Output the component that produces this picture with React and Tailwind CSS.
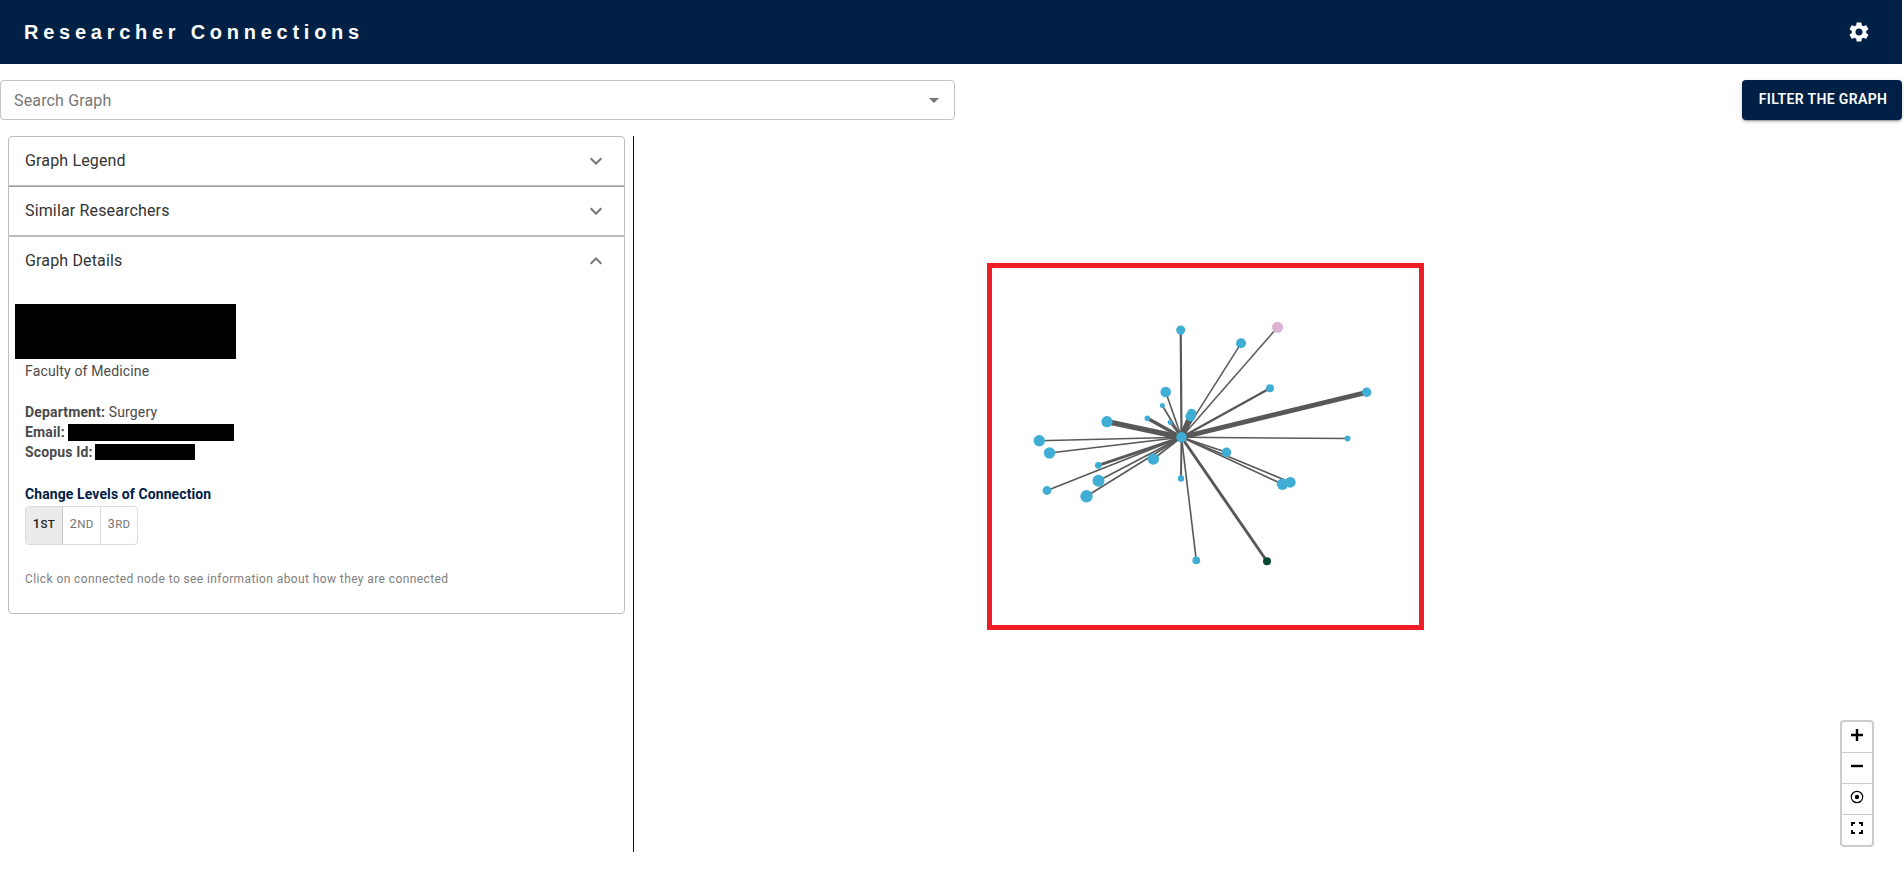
import { MdSettings, MdArrowDropDown, MdExpandMore } from "react-icons/md";

const BLUE = "#40aed4";
const CENTER = { x: 1181.5, y: 437.3 };

const nodes = [
  { x: 1180.7, y: 330, r: 4.5, w: 2.2 },
  { x: 1241, y: 343.3, r: 5, w: 1.5 },
  { x: 1277.5, y: 327.3, r: 5.5, w: 1.5, fill: "#ddb3d3" },
  { x: 1270, y: 388.3, r: 4, w: 2.4 },
  { x: 1366.7, y: 392.3, r: 4.7, w: 4.8 },
  { x: 1347.5, y: 438.5, r: 3, w: 1.4 },
  { x: 1165.7, y: 392, r: 5.3, w: 1.6 },
  { x: 1162.3, y: 405.5, r: 2.5, w: 1.7 },
  { x: 1147.3, y: 418.3, r: 2.8, w: 3.5 },
  { x: 1170, y: 422.5, r: 2.4, w: 1.7 },
  { x: 1191.7, y: 413.5, r: 4.7, w: 5.5 },
  { x: 1190.5, y: 416.5, r: 5, w: 5.5 },
  { x: 1107, y: 421.7, r: 5.6, w: 5.4 },
  { x: 1039.3, y: 440.7, r: 5.7, w: 1.6 },
  { x: 1049.5, y: 453, r: 5.7, w: 1.6 },
  { x: 1098.3, y: 465.3, r: 3.4, w: 3 },
  { x: 1047, y: 490.5, r: 4.4, w: 1.5 },
  { x: 1098.5, y: 480.7, r: 6, w: 1.6 },
  { x: 1086.5, y: 496.3, r: 6.2, w: 1.6 },
  { x: 1153.3, y: 459, r: 5.8, w: 1.8 },
  { x: 1181, y: 478.5, r: 3.2, w: 2 },
  { x: 1196.3, y: 560.3, r: 3.9, w: 1.6 },
  { x: 1267, y: 561.3, r: 4, w: 2.9, fill: "#04492f" },
  { x: 1226.5, y: 452.3, r: 4.8, w: 1.7 },
  { x: 1282.5, y: 484.3, r: 5.7, w: 1.6 },
  { x: 1290.3, y: 482.3, r: 5.4, w: 1.6 },
];

function Graph() {
  return (
    <svg viewBox="634 136 1268 716" width="1268" height="716" className="block">
      {nodes.map((n, i) => (
        <line key={i} x1={CENTER.x} y1={CENTER.y} x2={n.x} y2={n.y} stroke="#585858" strokeWidth={n.w} />
      ))}
      {nodes.map((n, i) => (
        <circle key={i} cx={n.x} cy={n.y} r={n.r} fill={n.fill || BLUE} />
      ))}
      <circle cx={CENTER.x} cy={CENTER.y} r="5.2" fill={BLUE} />
      <rect x="989.5" y="265.5" width="432" height="362" fill="none" stroke="#ee1c25" strokeWidth="5" />
    </svg>
  );
}

function PanelHeader({ title, open }) {
  return (
    <div className="flex h-12 items-center justify-between px-4">
      <span className="text-[16px] leading-6 font-normal tracking-[0.15px] text-[#333]">{title}</span>
      <MdExpandMore className={open ? "size-6 rotate-180 text-[#757575]" : "size-6 text-[#757575]"} />
    </div>
  );
}

function ZoomControls() {
  const cell = "flex h-[31px] items-center justify-center border-b border-[#ccc]";
  return (
    <div className="absolute right-[28px] bottom-[5px] w-[34px] rounded-[4px] border-2 border-[#ccc] bg-white">
      <div className={cell}>
        <svg width="14" height="14" viewBox="0 0 14 14" className="-mt-1"><path d="M7 1v12M1 7h12" stroke="#000" strokeWidth="2.4" /></svg>
      </div>
      <div className={cell}>
        <svg width="14" height="14" viewBox="0 0 14 14" className="-mt-1"><path d="M1 7h12" stroke="#000" strokeWidth="2.4" /></svg>
      </div>
      <div className={cell}>
        <svg width="14" height="14" viewBox="0 0 14 14" className="-mt-1">
          <circle cx="7" cy="7" r="5.7" fill="none" stroke="#000" strokeWidth="1.2" />
          <circle cx="7" cy="7" r="2.2" fill="#000" />
        </svg>
      </div>
      <div className="flex h-[30px] items-center justify-center">
        <svg width="14" height="14" viewBox="0 0 14 14" className="-mt-1">
          <path d="M2 5V2h3M9 2h3v3M12 9v3H9M5 12H2V9" fill="none" stroke="#000" strokeWidth="1.9" />
        </svg>
      </div>
    </div>
  );
}

export default function App() {
  return (
    <div className="h-[869px] w-[1902px] bg-white font-['Roboto',sans-serif] text-[#212121]">
      <header className="flex h-16 items-center justify-between bg-[#002145] pr-[31px] pl-6">
        <h1 className="font-['Liberation_Sans',Arial,sans-serif] text-[20px] leading-8 font-bold tracking-[4.74px] text-white">
          Researcher Connections
        </h1>
        <MdSettings className="size-6 text-white" />
      </header>

      <div className="mt-4 flex h-10 items-center justify-between">
        <div className="flex h-10 w-[955px] items-center justify-between rounded-[4px] border border-[#c4c4c4] pr-2 pl-[13px]">
          <span className="pt-0.5 text-[16px] leading-6 font-normal tracking-[0.15px] text-[#777]">Search Graph</span>
          <MdArrowDropDown className="size-6 text-[#757575]" />
        </div>
        <button className="h-10 w-[160px] rounded-[4px] bg-[#002145] pb-0.5 pl-0.5 text-[14px] font-semibold tracking-[0.36px] whitespace-nowrap text-white shadow-[0_3px_1px_-2px_rgba(0,0,0,0.2),0_2px_2px_0_rgba(0,0,0,0.14),0_1px_5px_0_rgba(0,0,0,0.12)]">
          FILTER THE GRAPH
        </button>
      </div>

      <main className="mt-4 flex h-[716px]">
        <aside className="w-[633px] pl-2">
          <div className="w-[617px]">
            <div className="rounded-t-[4px] border border-[#bdbdbd]"><PanelHeader title="Graph Legend" /></div>
            <div className="border border-[#bdbdbd] border-t-[#a0a0a0]"><PanelHeader title="Similar Researchers" /></div>
            <div className="h-[378px] rounded-b-[4px] border border-[#bdbdbd]">
              <PanelHeader title="Graph Details" open />
              <div className="px-4 text-[14px] leading-5 tracking-[0.15px] text-[#4a4a4a]">
                <div className="mt-[19px] -ml-[10px] h-[55px] w-[221px] bg-black" />
                <p className="mt-[2px]">Faculty of Medicine</p>
                <p className="mt-[21px]"><b className="font-bold">Department:</b> Surgery</p>
                <p className="flex"><b className="font-bold">Email:</b><span className="mt-[2px] ml-[3px] h-[17px] w-[166px] bg-black" /></p>
                <p className="flex"><b className="font-bold">Scopus Id:</b><span className="mt-[2px] ml-[2.5px] h-4 w-[100px] bg-black" /></p>
                <p className="mt-[22px] font-bold tracking-[0.1px] text-[#002145]">Change Levels of Connection</p>
                <div className="mt-[2px] flex h-[39px] w-[113px] overflow-hidden rounded-[4px] border border-[#dcdcdc] text-[11.5px] tracking-[0.3px] text-[#757575]">
                  <span className="flex w-[36px] items-center justify-center bg-[#ebebeb] pb-[3px] font-medium text-[#212121]"><span className="text-[13px]">1</span>ST</span>
                  <span className="flex w-[38px] items-center justify-center border-l border-[#c8c8c8] pb-[3px]"><span className="text-[13px]">2</span>ND</span>
                  <span className="flex w-[37px] items-center justify-center border-l border-[#dcdcdc] pb-[3px]"><span className="text-[13px]">3</span>RD</span>
                </div>
                <p className="mt-6 text-[12px] tracking-[0.4px] text-[#808080]">
                  Click on connected node to see information about how they are connected
                </p>
              </div>
            </div>
          </div>
        </aside>
        <section className="relative w-[1269px] border-l border-[#001432]">
          <Graph />
          <ZoomControls />
        </section>
      </main>
    </div>
  );
}
